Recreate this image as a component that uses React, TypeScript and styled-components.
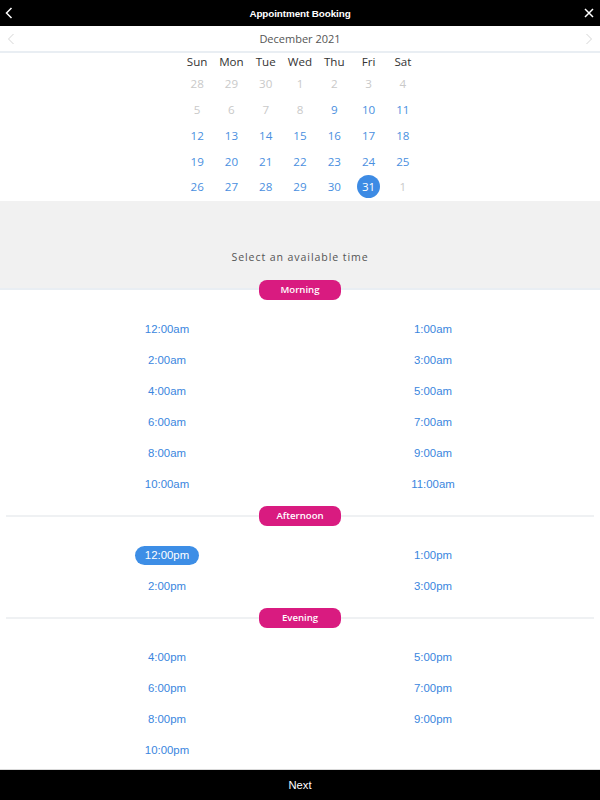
import React from "react";
import styled, { createGlobalStyle, css } from "styled-components";

const GlobalStyle = createGlobalStyle`
  html, body { margin: 0; padding: 0; background: #fff; }
  body { overflow: hidden; font-family: "Open Sans", "Liberation Sans", sans-serif; }
  * { box-sizing: border-box; }
`;

const Page = styled.div`
  height: 100vh;
  display: flex;
  flex-direction: column;
  background: #fff;
`;

const TopBar = styled.header`
  height: 26px;
  flex: none;
  background: #000;
  display: grid;
  grid-template-columns: 26px 1fr 26px;
  align-items: center;
`;

const TopTitle = styled.h1`
  margin: 0;
  text-align: center;
  color: #fff;
  font-family: "Liberation Sans", Arial, sans-serif;
  font-weight: bold;
  font-size: 9.9px;
  letter-spacing: -0.1px;
`;

const IconButton = styled.button<{ $align: "start" | "end" }>`
  border: 0;
  padding: 0;
  background: transparent;
  height: 26px;
  display: flex;
  align-items: center;
  justify-content: ${(p) => (p.$align === "start" ? "flex-start" : "flex-end")};
  padding-left: ${(p) => (p.$align === "start" ? "5px" : "0")};
  padding-right: ${(p) => (p.$align === "end" ? "6px" : "0")};
  cursor: pointer;
`;

const MonthBar = styled.div`
  height: 27px;
  flex: none;
  border-bottom: 2px solid #e9eef3;
  display: flex;
  align-items: center;
  justify-content: space-between;
  padding: 0 7px 0 7px;
`;

const MonthLabel = styled.span`
  font-size: 11px;
  color: #555;
`;

const Calendar = styled.div`
  width: 240px;
  margin: 0 auto;
  display: grid;
  grid-template-columns: repeat(7, 1fr);
  grid-template-rows: 18px;
  grid-auto-rows: 25.75px;
  padding-bottom: 1px;
`;

const Weekday = styled.div`
  font-size: 11.6px;
  color: #333;
  text-align: center;
  line-height: 18px;
`;

const DayCell = styled.div`
  display: flex;
  align-items: center;
  justify-content: center;
`;

const DayNum = styled.span<{ $muted?: boolean; $selected?: boolean }>`
  width: 23px;
  height: 23px;
  border-radius: 50%;
  display: flex;
  align-items: center;
  justify-content: center;
  font-size: 11.6px;
  color: #4a8fe0;
  ${(p) => p.$muted && css`color: #c9c9c9;`}
  ${(p) =>
    p.$selected &&
    css`
      background: #3d8be4;
      color: #fff;
    `}
`;

const Prompt = styled.div`
  flex: none;
  height: 89px;
  background: #f1f1f1;
  border-bottom: 2px solid #e9eef3;
  padding-top: 48px;
  text-align: center;
  font-size: 10.6px;
  letter-spacing: 0.9px;
  line-height: 16px;
  color: #555;
`;

const Content = styled.div`
  flex: 1;
  min-height: 0;
`;

const Section = styled.section<{ $first?: boolean }>`
  padding-bottom: 5.5px;
  ${(p) =>
    p.$first &&
    css`
      margin-top: -10px;
      position: relative;
      z-index: 1;
    `}
`;

const SectionHeader = styled.div`
  display: flex;
  align-items: center;
  height: 20px;
  padding: 0 6px;
  margin-bottom: 14.5px;
`;

const Rule = styled.div<{ $hidden?: boolean }>`
  flex: 1;
  height: 2px;
  background: ${(p) => (p.$hidden ? "transparent" : "#eff1f3")};
`;

const Pill = styled.div`
  width: 82px;
  height: 20px;
  border-radius: 8px;
  background: #d91b80;
  color: #fff;
  font-size: 9.6px;
  font-weight: 600;
  display: flex;
  align-items: center;
  justify-content: center;
`;

const TimeGrid = styled.div`
  width: 532px;
  margin: 0 auto;
  display: grid;
  grid-template-columns: 1fr 1fr;
  grid-auto-rows: 31px;
`;

const SlotCell = styled.div`
  display: flex;
  align-items: center;
  justify-content: center;
`;

const Slot = styled.button<{ $selected?: boolean }>`
  border: 0;
  background: transparent;
  font-family: "Liberation Sans", Arial, sans-serif;
  font-size: 11.4px;
  color: #3a86de;
  height: 19px;
  line-height: 19px;
  padding: 0 9.5px;
  border-radius: 10px;
  cursor: pointer;
  ${(p) =>
    p.$selected &&
    css`
      background: #3d8ee6;
      color: #fff;
    `}
`;

const Footer = styled.footer`
  height: 31px;
  flex: none;
  background: #000;
  border-top: 1px solid #d9d9d9;
  display: flex;
  align-items: center;
  justify-content: center;
  color: #fff;
  font-family: "Liberation Sans", Arial, sans-serif;
  font-size: 11.2px;
`;

const weekdays = ["Sun", "Mon", "Tue", "Wed", "Thu", "Fri", "Sat"];

type Day = { n: number; muted?: boolean; selected?: boolean };
const days: Day[] = [
  ...[28, 29, 30].map((n) => ({ n, muted: true })),
  ...[1, 2, 3, 4, 5, 6, 7, 8].map((n) => ({ n, muted: true })),
  ...Array.from({ length: 22 }, (_, i) => ({ n: i + 9 })),
  { n: 31, selected: true },
  { n: 1, muted: true },
];

const sections = [
  {
    label: "Morning",
    times: ["12:00am", "1:00am", "2:00am", "3:00am", "4:00am", "5:00am", "6:00am", "7:00am", "8:00am", "9:00am", "10:00am", "11:00am"],
  },
  { label: "Afternoon", times: ["12:00pm", "1:00pm", "2:00pm", "3:00pm"] },
  { label: "Evening", times: ["4:00pm", "5:00pm", "6:00pm", "7:00pm", "8:00pm", "9:00pm", "10:00pm"] },
];

const ChevronLeft = ({ color, w = 1.4 }: { color: string; w?: number }) => (
  <svg width="8" height="12" viewBox="0 0 8 12">
    <polyline points="6.5,1 1.5,6 6.5,11" fill="none" stroke={color} strokeWidth={w} />
  </svg>
);

const ChevronRight = ({ color, w = 1.4 }: { color: string; w?: number }) => (
  <svg width="8" height="12" viewBox="0 0 8 12">
    <polyline points="1.5,1 6.5,6 1.5,11" fill="none" stroke={color} strokeWidth={w} />
  </svg>
);

const Close = () => (
  <svg width="10" height="10" viewBox="0 0 10 10">
    <path d="M1 1 L9 9 M9 1 L1 9" stroke="#fff" strokeWidth="1.5" />
  </svg>
);

export default function App() {
  return (
    <Page>
      <GlobalStyle />
      <TopBar>
        <IconButton $align="start" aria-label="Back">
          <ChevronLeft color="#fff" w={1.5} />
        </IconButton>
        <TopTitle>Appointment Booking</TopTitle>
        <IconButton $align="end" aria-label="Close">
          <Close />
        </IconButton>
      </TopBar>
      <MonthBar>
        <ChevronLeft color="#d6d6d6" w={1} />
        <MonthLabel>December 2021</MonthLabel>
        <ChevronRight color="#d6d6d6" w={1} />
      </MonthBar>
      <Calendar>
        {weekdays.map((d) => (
          <Weekday key={d}>{d}</Weekday>
        ))}
        {days.map((d, i) => (
          <DayCell key={i}>
            <DayNum $muted={d.muted} $selected={d.selected}>
              {d.n}
            </DayNum>
          </DayCell>
        ))}
      </Calendar>
      <Prompt>Select an available time</Prompt>
      <Content>
        {sections.map((s, idx) => (
          <Section key={s.label} $first={idx === 0}>
            <SectionHeader>
              <Rule $hidden={idx === 0} />
              <Pill>{s.label}</Pill>
              <Rule $hidden={idx === 0} />
            </SectionHeader>
            <TimeGrid>
              {s.times.map((t) => (
                <SlotCell key={t}>
                  <Slot $selected={t === "12:00pm"}>{t}</Slot>
                </SlotCell>
              ))}
            </TimeGrid>
          </Section>
        ))}
      </Content>
      <Footer>Next</Footer>
    </Page>
  );
}
